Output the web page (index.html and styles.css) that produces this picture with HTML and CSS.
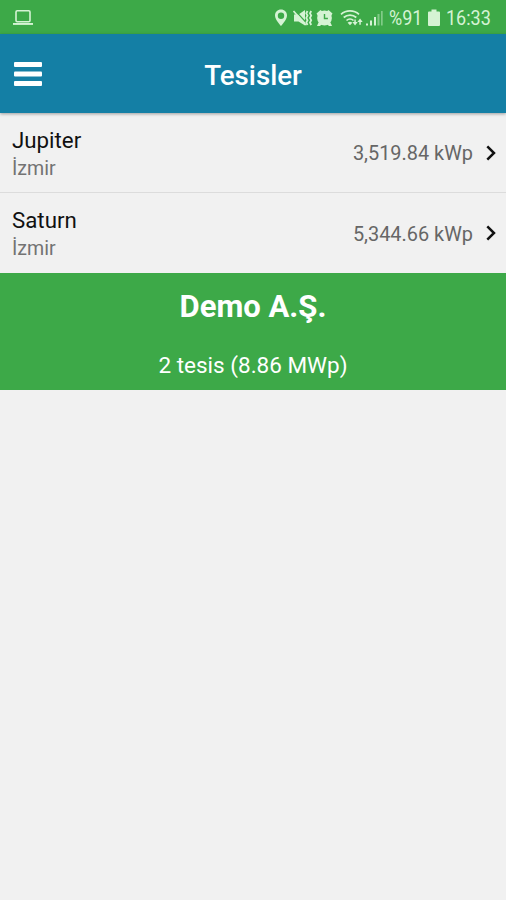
FILE: index.html
```html
<!DOCTYPE html>
<html lang="tr">
<head>
    <meta charset="UTF-8">
    <meta name="viewport" content="width=device-width, initial-scale=1.0">
    <title>Tesisler</title>
    <link rel="stylesheet" href="styles.css">
</head>
<body>
    <div class="status-bar">
        <svg class="laptop" width="20" height="17" viewBox="0 0 20 17">
            <rect x="3" y="1.8" width="14" height="11" rx="1.2" fill="none" stroke="currentColor" stroke-width="1.6"/>
            <path d="M0 14h20v1.9H0z" fill="currentColor"/>
        </svg>
        <div class="status-icons">
            <!-- location -->
            <svg width="14" height="18" viewBox="0 0 14 18">
                <path d="M7 .6C3.600.6 1 3.200 1 6.500C1 10.800 7 17 7 17s6-6.200 6-10.500C13 3.200 10.400.6 7 .6zm0 2.900a3.200 3.200 0 1 1 0 6.400a3.200 3.200 0 0 1 0-6.400z" fill="currentColor" fill-rule="evenodd"/>
            </svg>
            <!-- vibrate / muted -->
            <svg class="mute" width="20" height="18" viewBox="0 0 20 18">
                <path d="M1 5.500h4.500L12 1v15.500L5.500 12.500H1z" fill="currentColor"/>
                <path d="M2 1.500l12 13" stroke="#3da948" stroke-width="1.200"/>
                <path d="M.5 2l12.500 14" stroke="currentColor" stroke-width="1.600"/>
                <path d="M14.500 2l-1.200 2.300 1.200 2.300-1.200 2.300 1.200 2.300-1.200 2.300 1.200 2.500M18.200 2L17 4.300l1.200 2.300L17 8.900l1.200 2.300-1.200 2.300 1.200 2.500" fill="none" stroke="currentColor" stroke-width="1.800"/>
            </svg>
            <!-- alarm -->
            <svg class="alarm" width="17" height="18" viewBox="0 0 17 18">
                <circle cx="8.500" cy="9" r="7.400" fill="currentColor"/>
                <path d="M.5 4.500L4.500 1l2 1.500-4.500 4.500zM16.500 4.500L12.500 1l-2 1.500L15 7zM2.500 13.500h12L16 17h-3l-1.500-1.500h-6L4 17H1z" fill="currentColor"/>
                <path d="M8.500 5v4.500h3.400" fill="none" stroke="#3da948" stroke-width="1.400"/>
            </svg>
            <!-- wifi -->
            <svg class="wifi" width="24" height="18" viewBox="0 0 24 18">
                <g fill="none" stroke="currentColor" stroke-width="1.700">
                    <path d="M1 5.400C6 .8 14 .8 19 5.400"/>
                    <path d="M3.700 8.500c3.600-3.300 9-3.300 12.600 0"/>
                    <path d="M6.500 11.500c2-1.900 5-1.900 7 0"/>
                </g>
                <path d="M7.600 13.700c1.400-1.200 3.400-1.200 4.800 0L10 16.300z" fill="currentColor"/>
                <path d="M12.400 13h1.900v-2.500h1.500V13h1.900l-2.650 3.500zM17.400 13l2.650-3.500L22.700 13h-1.900v2.800h-1.500V13z" fill="currentColor"/>
            </svg>
            <!-- signal -->
            <svg class="signal" width="17" height="18" viewBox="0 0 17 18">
                <path d="M0 14.500h2v2H0zM4 11.500h2v5H4zM8 8h2v8.500H8z" fill="currentColor"/>
                <path d="M11.500 5h2v11.500h-2zM15 2h1.700v14.500H15z" fill="currentColor" opacity=".45"/>
            </svg>
            <span class="percent">%91</span>
            <svg class="battery" width="12" height="18" viewBox="0 0 12 18">
                <path d="M3.500.5h5v2H11q1 0 1 1V16q0 1-1 1H1q-1 0-1-1V3.500q0-1 1-1h2.500z" fill="currentColor"/>
            </svg>
            <span class="clock">16:33</span>
        </div>
    </div>

    <header class="header">
        <svg class="menu" width="28" height="26" viewBox="0 0 28 26">
            <rect y="1" width="28" height="5" rx="1" fill="#fff"/>
            <rect y="10.500" width="28" height="5" rx="1" fill="#fff"/>
            <rect y="20" width="28" height="5" rx="1" fill="#fff"/>
        </svg>
        <h1>Tesisler</h1>
    </header>

    <main>
        <div class="plant">
            <div class="plant-info">
                <div class="name">Jupiter</div>
                <div class="city">İzmir</div>
            </div>
            <span class="power">3,519.84 kWp</span>
            <svg class="arrow" width="10" height="16" viewBox="0 0 10 16">
                <path d="M1.300 1.300L8 8l-6.700 6.700" fill="none" stroke="#111" stroke-width="2.500"/>
            </svg>
        </div>
        <div class="plant">
            <div class="plant-info">
                <div class="name">Saturn</div>
                <div class="city">İzmir</div>
            </div>
            <span class="power">5,344.66 kWp</span>
            <svg class="arrow" width="10" height="16" viewBox="0 0 10 16">
                <path d="M1.300 1.300L8 8l-6.700 6.700" fill="none" stroke="#111" stroke-width="2.500"/>
            </svg>
        </div>
        <div class="summary">
            <h2>Demo A.Ş.</h2>
            <p>2 tesis (8.86 MWp)</p>
        </div>
    </main>
</body>
</html>
```
FILE: styles.css
```css
* {
    box-sizing: border-box;
}
body {
    margin: 0;
    min-height: 100vh;
    background: #f1f1f1;
    font-family: Roboto, "Liberation Sans", sans-serif;
}
svg {
    display: block;
    flex-shrink: 0;
}
.status-bar {
    display: flex;
    align-items: center;
    justify-content: space-between;
    height: 34px;
    padding: 1px 14px 0 13px;
    background: #3da948;
    color: #d5f3d4;
}
.status-icons {
    display: flex;
    align-items: center;
    font-size: 20px;
    line-height: 24px;
}
.mute {
    margin-left: 5px;
}
.alarm {
    margin-left: 3px;
}
.wifi {
    margin-left: 7px;
}
.signal {
    margin-left: 2px;
}
.percent {
    width: 33px;
    margin-left: 6px;
}
.battery {
    margin-left: 6px;
}
.clock {
    width: 46px;
    margin-left: 6px;
}
/* condensed digits of the system font */
.percent,
.clock {
    transform: scaleX(0.9);
    transform-origin: left center;
}
.header {
    display: grid;
    grid-template-columns: 28px 1fr 28px;
    align-items: center;
    height: 79px;
    padding: 0 14px;
    background: #147fa5;
    color: #fff;
    box-shadow: 0 1px 3px rgba(0,0,0,0.35);
}
.header h1 {
    margin: 3px 0 0;
    font-size: 27.7px;
    font-weight: 500;
    text-align: center;
}
.plant {
    display: flex;
    align-items: center;
    height: 80px;
    padding: 0 10px 0 12px;
    border-bottom: 1px solid #dcdcdc;
}
.plant:nth-child(2) {
    border-bottom: none;
}
.plant-info {
    flex: 1;
    padding-top: 3px;
}
.name {
    color: #111;
    font-size: 22.3px;
    line-height: 28px;
}
.city {
    padding-top: 1px;
    color: #737373;
    font-size: 19.6px;
    line-height: 28px;
}
.power {
    padding-top: 2px;
    color: #666;
    font-size: 19.9px;
}
.arrow {
    margin-left: 13px;
}
.summary {
    height: 117px;
    padding-top: 15px;
    background: #3da948;
    color: #fff;
    text-align: center;
}
.summary h2 {
    margin: 0;
    font-size: 31px;
    font-weight: 700;
    line-height: 38px;
}
.summary p {
    margin: 25px 0 0;
    font-size: 22.5px;
    line-height: 28px;
}
```
